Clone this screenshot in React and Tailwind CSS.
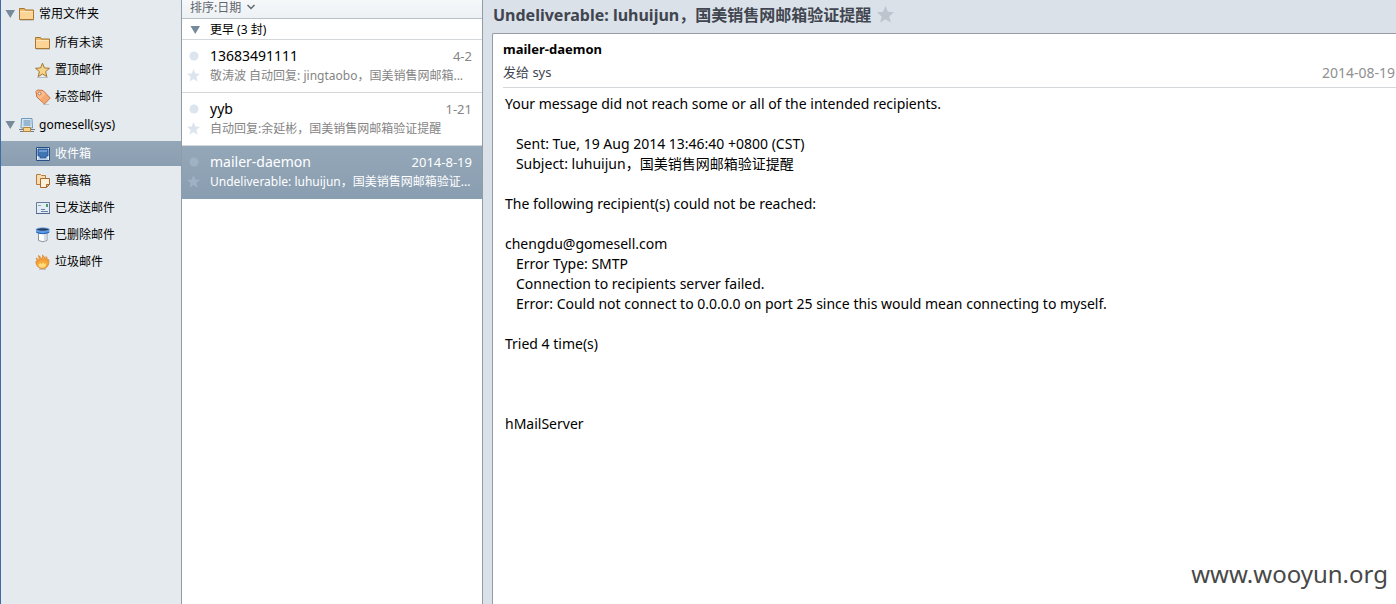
import { useState } from "react";

function FolderIcon() {
  return (
    <svg width="16" height="16" viewBox="0 0 16 16">
      <path d="M1 14.5h14" stroke="#c5cacd" />
      <path d="M.5 13.500v-11h5l1 1.500h8v9.500z" fill="#e9b968" stroke="#a9762f" />
      <path d="M1 5.500h13v7.500H1z" fill="#fcd596" />
      <path d="M1 5.500h13" stroke="#fbe6bd" />
    </svg>
  );
}

function StarIcon() {
  return (
    <svg width="16" height="16" viewBox="0 0 16 16">
      <path d="M2 15.500h11" stroke="#b9bfc4" />
      <path d="M7.500 1.200l1.900 4.700 5.100.4-3.900 3.300 1.200 5L7.500 12l-4.300 2.600 1.200-5L.500 6.300l5.100-.4z" fill="#f6d48a" stroke="#a3762f" strokeLinejoin="round" />
    </svg>
  );
}

function TagIcon() {
  return (
    <svg width="16" height="16" viewBox="0 0 16 16">
      <path d="M8 15.500h6" stroke="#c0c5c9" />
      <path d="M1 2.500l1.500-1.500 5.500.5 7.200 7.500-5.700 6L1.800 8z" fill="#f9bd8e" stroke="#c8703c" strokeLinejoin="round" />
      <path d="M5.500 10l5.500-5 3.500 4-5 5.200z" fill="#f29a5e" opacity=".6" />
      <circle cx="4.500" cy="4.500" r="1.500" fill="#e5eaee" stroke="#b8622f" strokeWidth=".8" />
    </svg>
  );
}

function ServerIcon() {
  return (
    <svg width="16" height="16" viewBox="0 0 16 16">
      <path d="M2.500 1.500h10.500l.5 9.500h-11.500z" fill="#d3e6f3" stroke="#6f9abb" />
      <path d="M4.500 4h7M4.500 6h7M4.500 8h7" stroke="#5c88ab" />
      <path d="M0 12.500h16M1 14.500h14" stroke="#6d7f8e" />
      <path d="M4.500 10.500h7v4h-7z" fill="#f9d488" stroke="#b98534" />
    </svg>
  );
}

function InboxIcon() {
  return (
    <svg width="16" height="16" viewBox="0 0 16 16">
      <path d="M1.500 1.500h13v13h-13z" fill="#e6eff8" stroke="#264f86" />
      <path d="M3 3h10v7h-2v2H5v-2H3z" fill="#4174b3" stroke="#2b5a96" />
      <path d="M4 4h8v2H4z" fill="#6f9bd0" />
      <path d="M3 13h10" stroke="#8fb1d6" />
    </svg>
  );
}

function DraftIcon() {
  return (
    <svg width="16" height="16" viewBox="0 0 16 16">
      <path d="M1.500 1.500h4l1 1h4v9h-9z" fill="#f7dcb0" stroke="#b97b39" />
      <path d="M5.500 5.500h9v6l-3 3h-6z" fill="#fdf0d8" stroke="#a8692f" />
      <path d="M14.500 11.500h-3v3z" fill="#e9bb7c" stroke="#a8692f" strokeLinejoin="round" />
    </svg>
  );
}

function SentIcon() {
  return (
    <svg width="16" height="16" viewBox="0 0 16 16">
      <path d="M1.500 2.500h13v11h-13z" fill="#e3edf6" stroke="#68789f" />
      <path d="M1 13.500h14" stroke="#54648b" />
      <path d="M3 5.500h3" stroke="#8bab96" />
      <path d="M11 4h2v3h-2z" fill="#4c9b6f" />
      <path d="M6 9.500h4M6 11.500h7" stroke="#6b7ea3" />
    </svg>
  );
}

function TrashIcon() {
  return (
    <svg width="16" height="16" viewBox="0 0 16 16">
      <path d="M3.500 6v7.500q4.250 2.500 8.500 0V6z" fill="#fbfcfd" stroke="#8793a3" />
      <path d="M9 7h2.500v6L9 14z" fill="#d5dbe3" />
      <path d="M1 2.500v3q6.750 3 13.500 0v-3z" fill="#5a9cec" />
      <path d="M1.500 5.500q6.250 2.500 12.500 0" fill="none" stroke="#2760b4" />
      <ellipse cx="7.750" cy="2.500" rx="6.500" ry="1.700" fill="#263f66" stroke="#7db2f2" strokeWidth=".8" />
    </svg>
  );
}

function FireIcon() {
  return (
    <svg width="16" height="16" viewBox="0 0 16 16">
      <path d="M4 15.200h7" stroke="#b4afa8" />
      <path d="M1 4c1.500.5 2.200 1.500 2.500 3C4.500 5.500 4 3.500 3.500 1.500 5.500 2.500 6.300 4 6.500 6 7.500 4.500 7.800 3 7.500 1c1.800 1.500 2.500 3 2.200 5C10.800 5 11 4 11 2.500c1.300 1.500 1.700 3 1.200 4.700.8-.4 1.200-.9 1.500-1.700.7 3-.2 6-2 7.700-2 1.800-6 1.800-8.200 0C1.500 11.500.8 9.500 1 7.200c.5.5.8.8 1.200.9C2.200 6.500 1.900 5.300 1 4z" fill="#f7a534" stroke="#d9822a" strokeWidth=".8" />
      <path d="M3.500 10.500c.8-.3 1.300-1 1.700-2 .7.500 1 1 1.300 1.800.8-.5 1.300-1.300 1.500-2.300.9.700 1.200 1.300 1.300 2.300.7-.3 1.100-.8 1.500-1.500.8 4-1.300 5-3.600 5s-4-1-3.700-3.300z" fill="#fedb7d" />
    </svg>
  );
}

function Triangle() {
  return (
    <svg width="10" height="8" viewBox="0 0 10 8" className="shrink-0">
      <path d="M.5 0H10L5.250 8z" fill="#768a9c" />
    </svg>
  );
}

function Star({ size, color }) {
  return (
    <svg width={size} height={size} viewBox="0 0 18 18" className="shrink-0">
      <path d="M9 0l2.500 6.200 6.500.5-5 4.300 1.600 6.600L9 14l-5.600 3.600L5 11 0 6.700l6.500-.5z" fill={color} />
    </svg>
  );
}

const common = [
  { name: "所有未读", icon: <FolderIcon /> },
  { name: "置顶邮件", icon: <StarIcon /> },
  { name: "标签邮件", icon: <TagIcon /> },
];

const account = [
  { name: "收件箱", icon: <InboxIcon /> },
  { name: "草稿箱", icon: <DraftIcon /> },
  { name: "已发送邮件", icon: <SentIcon /> },
  { name: "已删除邮件", icon: <TrashIcon /> },
  { name: "垃圾邮件", icon: <FireIcon /> },
];

const mails = [
  { id: 1, from: "13683491111", date: "4-2", preview: "敬涛波 自动回复: jingtaobo，国美销售网邮箱..." },
  { id: 2, from: "yyb", date: "1-21", preview: "自动回复:余延彬，国美销售网邮箱验证提醒" },
  { id: 3, from: "mailer-daemon", date: "2014-8-19", preview: "Undeliverable: luhuijun，国美销售网邮箱验证..." },
];

const message = `Your message did not reach some or all of the intended recipients.

   Sent: Tue, 19 Aug 2014 13:46:40 +0800 (CST)
   Subject: luhuijun，国美销售网邮箱验证提醒

The following recipient(s) could not be reached:

chengdu@gomesell.com
   Error Type: SMTP
   Connection to recipients server failed.
   Error: Could not connect to 0.0.0.0 on port 25 since this would mean connecting to myself.

Tried 4 time(s)



hMailServer`;

function FolderGroup({ title, icon, folders, active, onSelect }) {
  return (
    <section>
      <button className="flex h-[27px] w-full items-center gap-1 pl-1 text-left">
        <Triangle />
        {icon}
        <span>{title}</span>
      </button>
      <ul className="mt-0.5">
        {folders.map((f) => (
          <li key={f.name} className="py-px">
            <button
              onClick={() => onSelect(f.name)}
              className={`flex h-[25px] w-full items-center gap-1 pl-[34px] text-left ${active === f.name ? "bg-linear-to-b from-[#94a7b8] to-[#8a9eb1] text-white" : ""}`}
            >
              {f.icon}
              <span>{f.name}</span>
            </button>
          </li>
        ))}
      </ul>
    </section>
  );
}

function MailRow({ mail, selected, onSelect }) {
  const mark = selected ? "#9fb2c4" : "#dce5ee";
  return (
    <li className={`border-b ${selected ? "border-[#8a9eb1]" : "border-[#d5d8db]"}`}>
      <button
        onClick={() => onSelect(mail.id)}
        className={`flex h-[52px] w-full items-center gap-2.5 pr-2.5 pl-[5px] text-left ${selected ? "bg-linear-to-b from-[#94a7b8] to-[#8a9eb1] text-white" : ""}`}
      >
        <span className="flex w-[13px] flex-col items-center gap-2">
          <svg width="10" height="10" viewBox="0 0 10 10">
            <circle cx="5" cy="5" r="4.500" fill={mark} />
          </svg>
          <Star size={13} color={mark} />
        </span>
        <span className="min-w-0 flex-1">
          <span className="mb-0.5 flex items-center justify-between">
            <span className="text-sm leading-[18px]">{mail.from}</span>
            <span className={`text-[13px] leading-[18px] ${selected ? "" : "text-[#858585]"}`}>{mail.date}</span>
          </span>
          <span className={`block leading-[18px] whitespace-nowrap ${selected ? "" : "text-[#858585]"}`}>{mail.preview}</span>
        </span>
      </button>
    </li>
  );
}

export default function App() {
  const [folder, setFolder] = useState("收件箱");
  const [mailId, setMailId] = useState(3);

  return (
    <div className="relative flex min-h-screen bg-[#dae1e8] font-['Noto_Sans','Noto_Sans_CJK_SC',sans-serif] text-xs text-black">
      <nav className="flex w-[181px] shrink-0 flex-col gap-px border-l border-[#3f6ca6] bg-[#e5eaee]">
        <FolderGroup title="常用文件夹" icon={<FolderIcon />} folders={common} active={folder} onSelect={setFolder} />
        <FolderGroup title="gomesell(sys)" icon={<ServerIcon />} folders={account} active={folder} onSelect={setFolder} />
      </nav>

      <section className="w-[302px] shrink-0 border-x border-[#929ca6] bg-white">
        <button className="flex h-[19px] w-full items-start gap-1.5 border-b border-[#b9c2c9] bg-linear-to-b from-[#f6f8fa] to-[#edf1f4] pl-2 text-[#5f666d]">
          <span className="leading-4">排序:日期</span>
          <svg width="8" height="14" viewBox="0 0 8 14">
            <path d="M.5 5L4 8.500 7.500 5" fill="none" stroke="#5f666d" strokeWidth="1.500" />
          </svg>
        </button>
        <button className="flex h-[21px] w-full items-center gap-2.5 border-b border-[#d5d8db] pt-0.5 pl-2">
          <Triangle />
          <span>更早 (3 封)</span>
        </button>
        <ul>
          {mails.map((m) => (
            <MailRow key={m.id} mail={m} selected={m.id === mailId} onSelect={setMailId} />
          ))}
        </ul>
      </section>

      <main className="flex min-w-0 flex-1 flex-col pl-[9px]">
        <header className="flex h-[33px] items-center gap-1.5 pb-1 pl-px">
          <h1 className="text-base font-bold text-[#40454f]">Undeliverable: luhuijun，国美销售网邮箱验证提醒</h1>
          <button aria-label="star">
            <Star size={17} color="#bfc3cd" />
          </button>
        </header>
        <article className="flex-1 rounded-tl-xs border-t border-l border-[#969ba4] bg-white pl-2.5">
          <div className="border-b border-[#d5d8db] pt-1 pb-0.5">
            <h2 className="text-[13px] leading-[22px] font-bold">mailer-daemon</h2>
            <div className="flex items-center justify-between pr-px text-[13px] leading-[25px] text-[#40454f]">
              <p>发给 sys</p>
              <time className="text-sm leading-[25px] text-[#909090]">2014-08-19</time>
            </div>
          </div>
          <pre className="pt-1.5 pl-0.5 font-[inherit] text-sm leading-5 whitespace-pre-wrap">{message}</pre>
        </article>
      </main>

      <p className="absolute right-2 bottom-3 text-2xl leading-9 text-[#484848]">www.wooyun.org</p>
    </div>
  );
}
